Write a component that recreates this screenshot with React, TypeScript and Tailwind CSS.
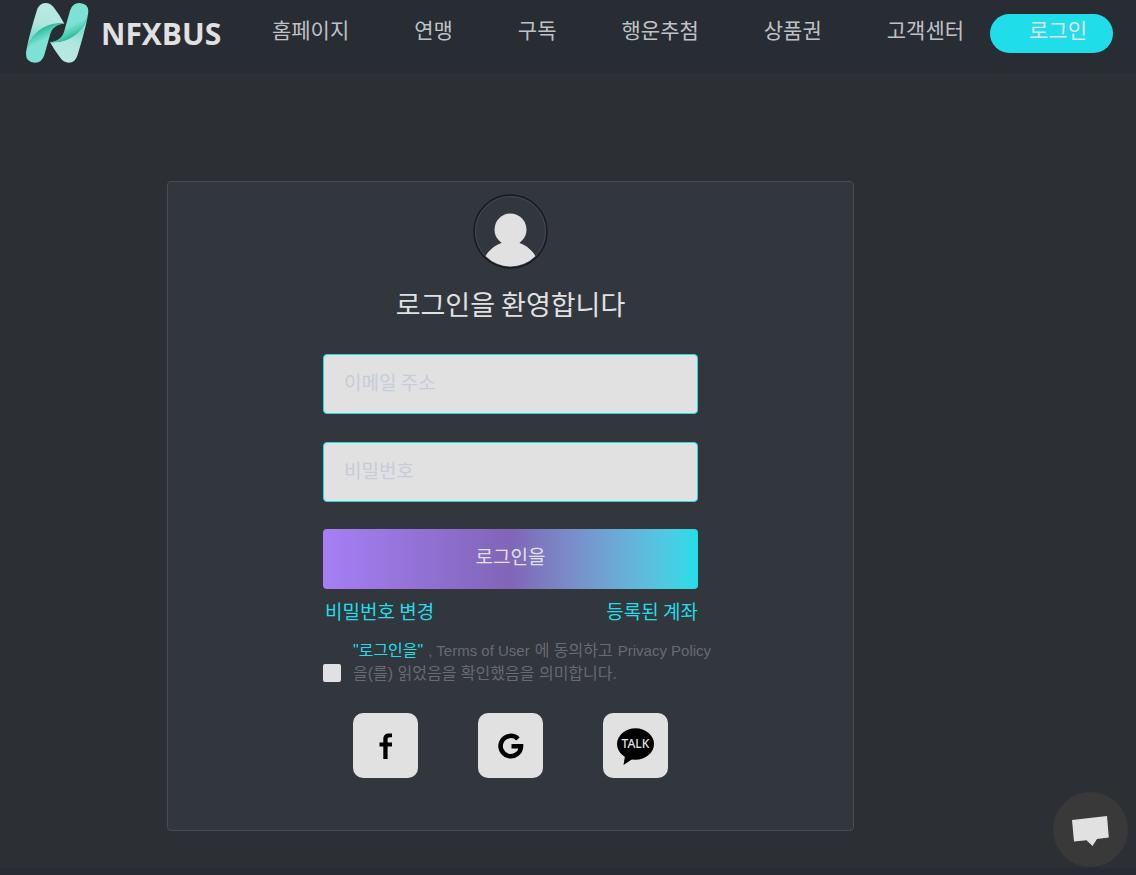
import type { ReactNode } from "react";

const navItems = ["홈페이지", "연맹", "구독", "행운추첨", "상품권", "고객센터"];

function Logo() {
  return (
    <svg viewBox="45 6 192 186" className="h-[62px] w-16 shrink-0" aria-hidden="true">
      <defs>
        <linearGradient id="strand" gradientUnits="userSpaceOnUse" x1="96" y1="82" x2="112" y2="116">
          <stop offset="0" stopColor="#1fb493" />
          <stop offset="0.35" stopColor="#45c9ae" />
          <stop offset="1" stopColor="#7de2d5" />
        </linearGradient>
        <linearGradient id="fold" gradientUnits="userSpaceOnUse" x1="110" y1="10" x2="80" y2="110">
          <stop offset="0" stopColor="#b9e9e3" />
          <stop offset="0.6" stopColor="#b0e6df" />
          <stop offset="1" stopColor="#86dccf" />
        </linearGradient>
        <g id="half">
          <path
            d="M49 152 C55 118 68 72 80 33 Q87 9 107 9 Q121 9 131 22 Q149 45 163 71 C120 66 62 96 49 152Z"
            fill="url(#fold)"
          />
          <path
            d="M48 163 C50 118 96 62 163 71 C141 73 128 82 121 101 L103 165 Q96 188 75 188 Q48 187 48 163Z"
            fill="url(#strand)"
          />
        </g>
      </defs>
      <use href="#half" />
      <use href="#half" transform="rotate(180 141.5 98.5)" />
    </svg>
  );
}

function Avatar() {
  return (
    <svg viewBox="0 0 76 76" className="h-[76px] w-[76px]" aria-hidden="true">
      <defs>
        <clipPath id="face">
          <circle cx="37.5" cy="37.5" r="35" />
        </clipPath>
      </defs>
      <circle cx="37.5" cy="37.5" r="36.5" fill="none" stroke="#17191c" strokeWidth="1.4" />
      <circle cx="37.5" cy="37.5" r="35" fill="none" stroke="#434853" strokeWidth="1" />
      <g clipPath="url(#face)" fill="#e1e1e1">
        <circle cx="37.5" cy="35.5" r="16" />
        <path d="M28.5 46 H46.5 V49 C55 52 61 58 64.5 66 V76 H10.5 V66 C14 58 20 52 28.5 49Z" />
      </g>
    </svg>
  );
}

function SocialButton({ label, children }: { label: string; children: ReactNode }) {
  return (
    <button
      type="button"
      aria-label={label}
      className="flex h-[65px] w-[65px] items-center justify-center rounded-[10px] bg-[#e1e1e1]"
    >
      {children}
    </button>
  );
}

function Header() {
  return (
    <header className="flex h-[73px] items-start justify-between bg-[#282c33] pr-[23px] pl-[25px]">
      <a href="#" className="flex items-center gap-3 pt-0.5">
        <Logo />
        <span className="pt-0.5 font-['Open_Sans','Noto_Sans',sans-serif] text-[30px] leading-10 font-bold">
          NFXBUS
        </span>
      </a>
      <nav className="flex pt-3.5 text-[21px] leading-[31px] whitespace-nowrap">
        {navItems.map((item) => (
          <a key={item} href="#" className="pr-[26px] pl-[39px] text-[#bfc1c5]">
            {item}
          </a>
        ))}
        <a href="#" className="h-[39px] rounded-full bg-[#1fdeea] pr-[26px] pl-[39px]">
          로그인
        </a>
      </nav>
    </header>
  );
}

function LoginForm() {
  const field =
    "h-[60px] w-full rounded-[4px] border border-[#1fdeea] bg-[#e1e1e1] px-5 pb-1.5 text-[19px] text-[#32363d] placeholder-[#c6ccd8] outline-none";

  return (
    <form className="flex w-[375px] flex-col">
      <input type="email" aria-label="이메일 주소" placeholder="이메일 주소" className={field} />
      <input
        type="password"
        aria-label="비밀번호"
        placeholder="비밀번호"
        className={`${field} mt-7`}
      />
      <button
        type="submit"
        className="mt-[27px] h-[60px] rounded-[4px] bg-linear-to-r from-[#a67ff5] via-[#8065b8] to-[#1fdeea] pb-1.5 text-[19px]"
      >
        로그인을
      </button>
      <div className="mt-2 flex justify-between pl-0.5 text-[19px] leading-7 text-[#1fdeea]">
        <a href="#">비밀번호 변경</a>
        <a href="#">등록된 계좌</a>
      </div>
      <div className="mt-3.5 flex items-end gap-3">
        <input
          id="agree"
          type="checkbox"
          className="mb-[3px] h-[18px] w-[18px] shrink-0 appearance-none rounded-[2px] bg-[#e1e1e1] checked:bg-[#1fdeea]"
        />
        <label
          htmlFor="agree"
          className="-mr-5 flex flex-col font-['Liberation_Sans','Noto_Sans_CJK_KR',sans-serif] text-[15px] leading-[23px] whitespace-nowrap text-[#686b71]"
        >
          <span className="flex items-baseline gap-[5px]">
            <span className="text-[16px] text-[#1fdeea]">"로그인을"</span>
            <span>, Terms of User</span>
            <span className="text-[16px]">에 동의하고</span>
            <span>Privacy Policy</span>
          </span>
          <span className="text-[16px]">을(를) 읽었음을 확인했음을 의미합니다.</span>
        </label>
      </div>
    </form>
  );
}

export default function App() {
  return (
    <div className="flex min-h-screen flex-col bg-[#2c2f33] font-['Noto_Sans_CJK_KR',sans-serif] text-[#e1e1e1]">
      <Header />
      <main className="grow pt-[108px] pb-[37px] pl-[167px]">
        <section className="flex w-full max-w-[687px] flex-col items-center rounded-[4px] border border-[#484c55] bg-[#32363d] pt-3 pb-[52px]">
          <Avatar />
          <h1 className="mt-3.5 mb-[30px] text-[27px] leading-10">로그인을 환영합니다</h1>
          <LoginForm />
          <div className="mt-7 flex gap-[60px]">
            <SocialButton label="Facebook">
              <svg viewBox="0 0 14 26" className="h-[26px] w-3.5" aria-hidden="true">
                <path
                  d="M4.3 26V13.5H0.5V9.5H4.3V6.5C4.3 2.4 6.4 0.5 10 0.5H13V4.3H11C9.2 4.3 8.6 5.1 8.6 6.7V9.5H13V13.5H8.6V26Z"
                  fill="#000"
                />
              </svg>
            </SocialButton>
            <SocialButton label="Google">
              <svg viewBox="0 0 26 26" className="h-[26px] w-[26px]" aria-hidden="true">
                <path
                  d="M20 5.8A10.2 10.2 0 1 0 23 13.2H13.5"
                  fill="none"
                  stroke="#000"
                  strokeWidth="4.6"
                />
              </svg>
            </SocialButton>
            <SocialButton label="KakaoTalk">
              <svg viewBox="0 0 38 38" className="h-[38px] w-[38px]" aria-hidden="true">
                <ellipse cx="18.5" cy="17" rx="18.5" ry="15.7" fill="#000" />
                <path d="M8.5 26L6.5 38L17 31Z" fill="#000" />
                <text
                  x="18.5"
                  y="21"
                  textAnchor="middle"
                  fill="#e1e1e1"
                  fontSize="12"
                  fontWeight="500"
                  fontFamily="Noto Sans, sans-serif"
                >
                  TALK
                </text>
              </svg>
            </SocialButton>
          </div>
        </section>
      </main>
      <footer className="h-[7px] bg-[#282b33]" />
      <button
        type="button"
        aria-label="Chat"
        className="fixed right-2 bottom-2 flex h-[75px] w-[75px] items-center justify-center rounded-full bg-[#393939]"
      >
        <svg viewBox="0 0 38 32" className="h-8 w-[38px]" aria-hidden="true">
          <path d="M0 6L35 2L36.8 23.5L25 25L20.5 32L14.5 26.2L2 27.5Z" fill="#e1e1e1" />
        </svg>
      </button>
    </div>
  );
}
